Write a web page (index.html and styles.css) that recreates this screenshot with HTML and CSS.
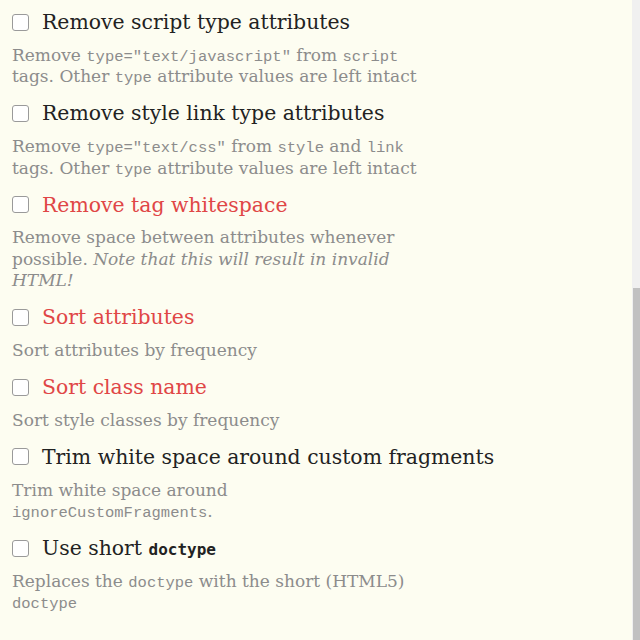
FILE: index.html
```html
<!DOCTYPE html>
<html>
<head>
<meta charset="utf-8">
<link rel="stylesheet" href="styles.css">
</head>
<body>
<div class="page">
  <div class="options">
    <div class="option">
      <label class="title"><span class="box"></span><span>Remove script type attributes</span></label>
      <p class="desc">Remove <code>type="text/javascript"</code> from <code>script</code> tags. Other <code>type</code> attribute values are left intact</p>
    </div>
    <div class="option">
      <label class="title"><span class="box"></span><span>Remove style link type attributes</span></label>
      <p class="desc">Remove <code>type="text/css"</code> from <code>style</code> and <code>link</code> tags. Other <code>type</code> attribute values are left intact</p>
    </div>
    <div class="option">
      <label class="title red"><span class="box"></span><span>Remove tag whitespace</span></label>
      <p class="desc">Remove space between attributes whenever possible. <em>Note that this will result in invalid HTML!</em></p>
    </div>
    <div class="option">
      <label class="title red"><span class="box"></span><span>Sort attributes</span></label>
      <p class="desc">Sort attributes by frequency</p>
    </div>
    <div class="option">
      <label class="title red"><span class="box"></span><span>Sort class name</span></label>
      <p class="desc">Sort style classes by frequency</p>
    </div>
    <div class="option">
      <label class="title"><span class="box"></span><span>Trim white space around custom fragments</span></label>
      <p class="desc">Trim white space around <code>ignoreCustomFragments</code>.</p>
    </div>
    <div class="option">
      <label class="title"><span class="box"></span><span>Use short <code class="tcode">doctype</code></span></label>
      <p class="desc">Replaces the <code>doctype</code> with the short (HTML5) <code>doctype</code></p>
    </div>
  </div>
  <div class="scrollbar"><div class="thumb"></div></div>
</div>
</body>
</html>
```
FILE: styles.css
```css
html, body {
  margin: 0;
  padding: 0;
  background: #fdfdf1;
}
.page {
  display: flex;
  width: 640px;
  height: 640px;
  overflow: hidden;
}
.options {
  flex: 1;
  padding: 9px 0 0 12px;
  font-family: "DejaVu Serif", serif;
}
.option {
  margin-bottom: 12.5px;
}
.title {
  display: flex;
  align-items: center;
  gap: 13px;
  height: 26px;
  font-size: 20.4px;
  color: #222;
  margin-bottom: 9.75px;
}
.title.red {
  color: #e04646;
}
.box {
  width: 15px;
  height: 15px;
  border: 1px solid #9a9a9a;
  border-radius: 3px;
  background: #fff;
  flex: none;
}
.desc {
  margin: 0;
  width: 420px;
  font-size: 17px;
  line-height: 21.5px;
  color: #8c8c8c;
}
.desc code {
  font-family: "Liberation Mono", monospace;
  font-size: 15.5px;
  line-height: 1;
}
.tcode {
  font-family: "DejaVu Sans Mono", monospace;
  font-size: 16px;
  font-weight: bold;
  line-height: 1;
}
.scrollbar {
  width: 8px;
  background: #f0f0f0;
  display: flex;
  flex-direction: column;
}
.thumb {
  margin-top: 288px;
  margin-left: 1px;
  height: 352px;
  background: #c1c1c1;
}
```
